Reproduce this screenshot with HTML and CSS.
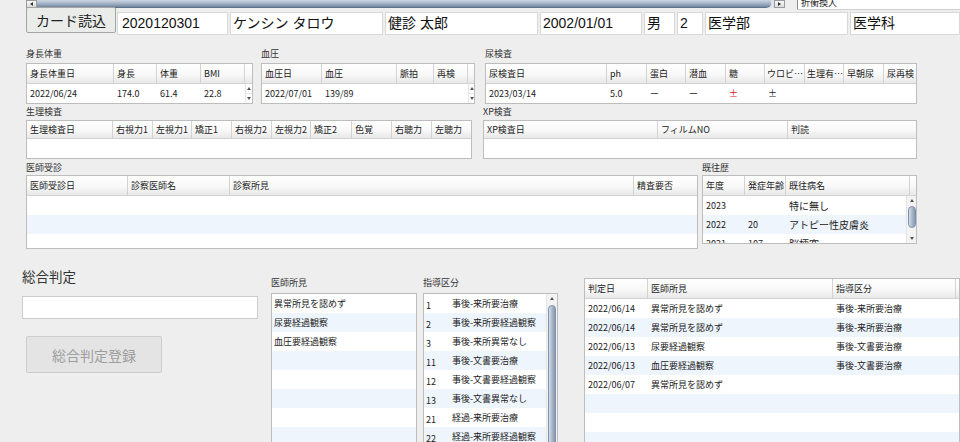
FILE: index.html
```html
<!DOCTYPE html>
<html lang="ja">
<head>
<meta charset="utf-8">
<title>健診結果</title>
<link rel="stylesheet" href="styles.css">
</head>
<body>
<div class="topstrip">
  <div class="hscroll">
    <div class="harrow"><span class="tri-l"></span></div>
    <div class="hthumb"></div>
    <div class="harrow"><span class="tri-r"></span></div>
  </div>
  <div class="clipbox"><span>折衝換人</span></div>
</div>

<div class="idrow">
  <button class="cardbtn" type="button">カード読込</button>
  <div class="fld f1">2020120301</div>
  <div class="fld f2">ケンシン タロウ</div>
  <div class="fld f3">健診 太郎</div>
  <div class="fld f4">2002/01/01</div>
  <div class="fld f5">男</div>
  <div class="fld f6">2</div>
  <div class="fld f7">医学部</div>
  <div class="fld f8">医学科</div>
</div>

<div class="sec sec1">
  <div class="grp g-hw">
    <div class="lbl">身長体重</div>
    <div class="tbl t-hw">
      <div class="tr thead"><div class="th">身長体重日</div><div class="th">身長</div><div class="th">体重</div><div class="th">BMI</div><div class="th"></div></div>
      <div class="tr trow"><div class="td">2022/06/24</div><div class="td">174.0</div><div class="td">61.4</div><div class="td">22.8</div><div class="spin"><span class="sp"><i class="up"></i></span><span class="sp"><i class="dn"></i></span></div></div>
    </div>
  </div>
  <div class="grp g-bp">
    <div class="lbl">血圧</div>
    <div class="tbl t-bp">
      <div class="tr thead"><div class="th">血圧日</div><div class="th">血圧</div><div class="th">脈拍</div><div class="th">再検</div><div class="th"></div></div>
      <div class="tr trow"><div class="td">2022/07/01</div><div class="td">139/89</div><div class="td"></div><div class="td"></div><div class="spin"><span class="sp"><i class="up"></i></span><span class="sp"><i class="dn"></i></span></div></div>
    </div>
  </div>
  <div class="grp g-ur">
    <div class="lbl">尿検査</div>
    <div class="tbl t-ur">
      <div class="tr thead"><div class="th">尿検査日</div><div class="th">ph</div><div class="th">蛋白</div><div class="th">潜血</div><div class="th">糖</div><div class="th tight">ウロビ…</div><div class="th tight">生理有…</div><div class="th">早朝尿</div><div class="th">尿再検</div></div>
      <div class="tr trow"><div class="td">2023/03/14</div><div class="td">5.0</div><div class="td">ー</div><div class="td">ー</div><div class="td red">±</div><div class="td">±</div><div class="td"></div><div class="td"></div><div class="td"></div></div>
    </div>
  </div>
</div>

<div class="sec sec2">
  <div class="grp g-ph">
    <div class="lbl">生理検査</div>
    <div class="tbl t-ph">
      <div class="tr thead"><div class="th">生理検査日</div><div class="th">右視力1</div><div class="th">左視力1</div><div class="th">矯正1</div><div class="th">右視力2</div><div class="th">左視力2</div><div class="th">矯正2</div><div class="th">色覚</div><div class="th">右聴力</div><div class="th">左聴力</div></div>
      <div class="tr trow"></div>
    </div>
  </div>
  <div class="grp g-xp">
    <div class="lbl">XP検査</div>
    <div class="tbl t-xp">
      <div class="tr thead"><div class="th">XP検査日</div><div class="th">フィルムNO</div><div class="th">判読</div></div>
      <div class="tr trow"></div>
    </div>
  </div>
</div>

<div class="sec sec3">
  <div class="grp g-dr">
    <div class="lbl">医師受診</div>
    <div class="tbl t-dr">
      <div class="tr thead"><div class="th">医師受診日</div><div class="th">診察医師名</div><div class="th">診察所見</div><div class="th">精査要否</div></div>
      <div class="tbody dr-body">
        <div class="trow"></div>
        <div class="trow alt"></div>
        <div class="trow"></div>
      </div>
    </div>
  </div>
  <div class="grp g-hist">
    <div class="lbl">既往歴</div>
    <div class="tbl t-hist">
      <div class="tr thead"><div class="th">年度</div><div class="th">発症年齢</div><div class="th">既往病名</div><div class="th"></div></div>
      <div class="hist-body">
        <div class="hist-rows">
          <div class="tr trow"><div class="td">2023</div><div class="td"></div><div class="td big">特に無し</div></div>
          <div class="tr trow alt"><div class="td">2022</div><div class="td">20</div><div class="td big">アトピー性皮膚炎</div></div>
          <div class="tr trow"><div class="td">2021</div><div class="td">107</div><div class="td big">脳梗塞</div></div>
        </div>
        <div class="vscroll">
          <div class="va"><i class="up"></i></div>
          <div class="vthumb th-short"></div>
          <div class="vgap"></div>
          <div class="va"><i class="dn"></i></div>
        </div>
      </div>
    </div>
  </div>
</div>

<div class="bottom">
  <div class="judge">
    <div class="judge-lbl">総合判定</div>
    <div class="judge-in"></div>
    <button class="judge-btn" type="button" disabled>総合判定登録</button>
  </div>
  <div class="lst-grp g-find">
    <div class="lbl">医師所見</div>
    <div class="lst">
      <div class="li">異常所見を認めず</div>
      <div class="li">尿要経過観察</div>
      <div class="li">血圧要経過観察</div>
      <div class="li"></div>
      <div class="li"></div>
      <div class="li"></div>
      <div class="li"></div>
      <div class="li"></div>
    </div>
  </div>
  <div class="lst-grp g-guide">
    <div class="lbl">指導区分</div>
    <div class="lst lst-flex">
      <div class="lrows">
        <div class="li"><span class="code">1</span>事後-来所要治療</div>
        <div class="li"><span class="code">2</span>事後-来所要経過観察</div>
        <div class="li"><span class="code">3</span>事後-来所異常なし</div>
        <div class="li"><span class="code">11</span>事後-文書要治療</div>
        <div class="li"><span class="code">12</span>事後-文書要経過観察</div>
        <div class="li"><span class="code">13</span>事後-文書異常なし</div>
        <div class="li"><span class="code">21</span>経過-来所要治療</div>
        <div class="li"><span class="code">22</span>経過-来所要経過観察</div>
      </div>
      <div class="vscroll vs-guide">
        <div class="va"><i class="up"></i></div>
        <div class="vthumb th-long"></div>
      </div>
    </div>
  </div>
  <div class="g-res">
    <div class="tbl t-res">
      <div class="tr thead"><div class="th">判定日</div><div class="th">医師所見</div><div class="th">指導区分</div><div class="th"></div></div>
      <div class="tr trow"><div class="td">2022/06/14</div><div class="td">異常所見を認めず</div><div class="td">事後-来所要治療</div><div class="td"></div></div>
      <div class="tr trow alt"><div class="td">2022/06/14</div><div class="td">異常所見を認めず</div><div class="td">事後-来所要治療</div><div class="td"></div></div>
      <div class="tr trow"><div class="td">2022/06/13</div><div class="td">尿要経過観察</div><div class="td">事後-文書要治療</div><div class="td"></div></div>
      <div class="tr trow alt"><div class="td">2022/06/13</div><div class="td">血圧要経過観察</div><div class="td">事後-文書要治療</div><div class="td"></div></div>
      <div class="tr trow"><div class="td">2022/06/07</div><div class="td">異常所見を認めず</div><div class="td"></div><div class="td"></div></div>
      <div class="tr trow alt"></div>
      <div class="tr trow"></div>
      <div class="tr trow alt"></div>
    </div>
  </div>
</div>
</body>
</html>
```

FILE: styles.css
```css
* { box-sizing: border-box; }
html, body { margin: 0; padding: 0; }
html { height: 442px; overflow: hidden; }
body {
  width: 960px;
  height: 442px;
  overflow: hidden;
  background: #eeeeee;
  font-family: "Noto Sans CJK JP", "Noto Sans", sans-serif;
  font-size: 9px;
  color: #222;
}

/* top strip */
.topstrip { height: 7px; display: flex; align-items: flex-start; }
.hscroll { margin-left: 26px; width: 759px; height: 8px; display: flex; background: #dfe3e8; }
.harrow {
  width: 11px; height: 8px; flex: none;
  background: linear-gradient(#fbfbfb, #dadada);
  border: 1px solid #9a9a9a;
  display: flex; align-items: center; justify-content: center;
}
.tri-l { width: 0; height: 0; border-top: 2px solid transparent; border-bottom: 2px solid transparent; border-right: 3px solid #333; }
.tri-r { width: 0; height: 0; border-top: 2px solid transparent; border-bottom: 2px solid transparent; border-left: 3px solid #333; }
.hthumb {
  flex: 1; margin-right: 3px;
  background: linear-gradient(#cdd6e1, #9eafc4 55%, #72869f);
  border-bottom: 1px solid #5f728c;
  border-radius: 0 0 5px 0;
}
.clipbox {
  margin-left: 12px; flex: 1; height: 10px;
  background: #fff; border-left: 1px solid #8c8c8c; border-bottom: 1px solid #d0d0d0;
  overflow: hidden; padding-left: 3px;
  font-size: 9px; line-height: 6px; color: #222; white-space: nowrap;
}

/* id row */
.idrow {
  display: flex; align-items: flex-start; padding-left: 26px;
  font-family: "Liberation Sans", "Noto Sans CJK JP", sans-serif; font-size: 14px;
}
.cardbtn {
  width: 90px; height: 26px; margin: 0; padding: 0;
  font: inherit; color: #222;
  background: #e9ece9; border: 1px solid #a5a5a5; border-radius: 2px;
}
.fld {
  margin-top: 5px; margin-left: 2px; height: 23px; line-height: 21px;
  padding-left: 2px; background: #fff; border: 1px solid #d8d8d8;
  white-space: nowrap; overflow: hidden; color: #111;
}
.f1 { margin-left: 1px; width: 111px; padding-left: 4px; }
.f2 { width: 153px; }
.f3 { width: 153px; }
.f4 { width: 102px; }
.f5 { width: 31px; }
.f6 { width: 26px; }
.f7 { width: 143px; }
.f8 { flex: 1; }

/* sections */
.sec { display: flex; padding-left: 26px; }
.sec1 { margin-top: 13px; }
.sec2 { margin-top: 2px; }
.sec3 { margin-top: 3px; }
.lbl { height: 12px; line-height: 12px; font-size: 9px; color: #333; white-space: nowrap; }
.sec1 .tbl { margin-top: 3px; }
.sec2 .tbl { margin-top: 2px; }
.sec3 .tbl { margin-top: 1px; }

.g-hw { width: 227px; }
.g-bp { width: 214px; margin-left: 8px; }
.g-ur { width: 432px; margin-left: 10px; }
.g-ph { width: 446px; }
.g-xp { width: 434px; margin-left: 11px; }
.g-dr { width: 672px; }
.g-hist { width: 215px; margin-left: 4px; }

/* tables */
.tbl { background: #fff; border: 1px solid #bdbdbd; overflow: hidden; }
.tr { display: grid; }
.thead {
  height: 20px;
  background: linear-gradient(#ffffff, #f8f8f8 55%, #e8e8e8);
  border-bottom: 1px solid #d2d2d2;
}
.th {
  border-right: 1px solid #d3d3d3; padding: 0 3px; line-height: 19px;
  white-space: nowrap; overflow: hidden; color: #222;
}
.th:last-child { border-right: 0; }
.th.tight { padding: 0 2px; }
.td { padding: 0 3px; white-space: nowrap; overflow: hidden; }
.trow { height: 19px; line-height: 19px; }
.alt { background: #eef5fd; }
.red { color: #e01010; }
.big { font-size: 10px; }

.sec2 .thead { height: 18px; }
.sec2 .th { line-height: 17px; }

.t-hw .tr { grid-template-columns: 87px 43px 44px 44px 1fr; }
.t-bp .tr { grid-template-columns: 60px 75px 37px 34px 1fr; }
.t-ur .tr { grid-template-columns: 121px 40px 39px 40px 39px 40px 39px 40px 1fr; }
.t-ph .tr { grid-template-columns: 86px 40px 39px 40px 40px 39px 41px 40px 40px 1fr; }
.t-xp .tr { grid-template-columns: 174px 130px 1fr; }
.t-dr .tr { grid-template-columns: 101px 102px 404px 1fr; }
.t-hist .thead { grid-template-columns: 42px 41px 124px 1fr; }
.t-hist .trow { grid-template-columns: 42px 41px 1fr; }
.t-res .tr { grid-template-columns: 63px 185px 123px 1fr; }

.dr-body { height: 52px; overflow: hidden; }
.hist-body { height: 47px; display: flex; overflow: hidden; }
.hist-rows { flex: 1; overflow: hidden; }

/* spinner */
.spin { display: flex; flex-direction: column; border-left: 1px solid #e4e4e4; }
.sp { flex: 1; display: flex; align-items: center; justify-content: center; }
.sp + .sp { border-top: 1px solid #e4e4e4; }
.up { display: block; width: 0; height: 0; border-left: 2px solid transparent; border-right: 2px solid transparent; border-bottom: 3px solid #555; }
.dn { display: block; width: 0; height: 0; border-left: 2px solid transparent; border-right: 2px solid transparent; border-top: 3px solid #555; }

/* vertical scrollbars */
.vscroll {
  width: 10px; flex: none; background: #f3f3f3; border-left: 1px solid #e6e6e6;
  display: flex; flex-direction: column; align-items: center; overflow: hidden;
}
.va { height: 9px; width: 100%; flex: none; display: flex; align-items: center; justify-content: center; }
.vthumb {
  width: 8px; flex: none; border-radius: 4px;
  background: linear-gradient(90deg, #d6dee8, #aebdcf 45%, #8599b2);
  border: 1px solid #7f93ad;
}
.th-short { margin-top: 1px; height: 22px; }
.th-long { margin-top: 2px; height: 160px; }
.vgap { flex: 1; }
.vs-guide { width: 11px; }

/* bottom */
.bottom { display: flex; align-items: flex-start; margin-top: 18px; padding-left: 22px; height: 176px; overflow: hidden; }
.judge { width: 236px; flex: none; }
.judge-lbl { font-size: 13.5px; line-height: 19px; height: 19px; color: #333; }
.judge-in { margin-top: 10px; height: 23px; background: #fff; border: 1px solid #cccccc; }
.judge-btn {
  display: block; margin: 17px 0 0 4px; padding: 0; width: 136px; height: 37px;
  font-family: "Noto Sans CJK JP", sans-serif; font-size: 14px; color: #9d9d9d;
  background: #e4e4e4; border: 1px solid #cdcdcd; border-radius: 2px;
}
.lst-grp { margin-top: 10px; flex: none; }
.g-find { width: 146px; margin-left: 13px; }
.g-guide { width: 135px; margin-left: 6px; }
.lst { margin-top: 4px; height: 150px; background: #fff; border: 1px solid #bdbdbd; overflow: hidden; }
.lst-flex { display: flex; }
.lrows { flex: 1; overflow: hidden; }
.li { height: 19px; line-height: 19px; padding-left: 2px; white-space: nowrap; overflow: hidden; }
.li:nth-child(even) { background: #eef5fd; }
.code { display: inline-block; width: 26px; vertical-align: -2px; }
.g-res { width: 376px; flex: none; margin-left: 26px; margin-top: 11px; }
.t-res { height: 165px; }
```
